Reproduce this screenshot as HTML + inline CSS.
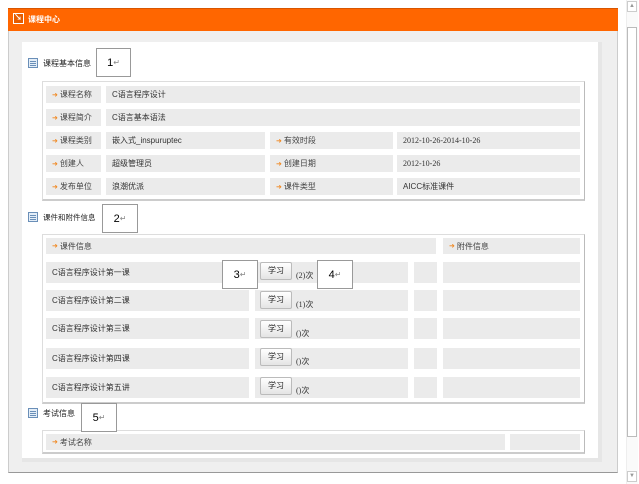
<!DOCTYPE html>
<html><head><meta charset="utf-8"><style>
*{margin:0;padding:0;box-sizing:border-box}
body{width:639px;height:484px;background:#fff;position:relative;overflow:hidden;font-family:"Liberation Sans","Noto Sans CJK SC",sans-serif;font-size:8px;color:#333}
.a{position:absolute}
.c{position:absolute;background:#ebebeb;line-height:normal;padding-left:6px;display:flex;align-items:center;font-size:8px}
.l{color:#444}
.l:before{content:"➜";color:#f08a24;font-size:7px;margin-right:2px}
.box{position:absolute;border:1px solid #999;background:#fff;font-size:11px;display:flex;align-items:center;justify-content:center;color:#000}
.box span{font-size:8px;color:#888}
.ic{position:absolute;width:10px;height:10px;border:1px solid #6a8fb8;background:#e4eef8}
.ic:after{content:"";position:absolute;left:1px;top:2px;width:6px;height:1px;background:#6a8fb8;box-shadow:0 2px 0 #6a8fb8,0 4px 0 #6a8fb8}
.h{position:absolute;font-size:8px;color:#222;line-height:12px}
.tb{position:absolute;border:1px solid #ddd;border-right-color:#bbb;border-bottom:2px solid #ccc;background:#fff}
.btn{position:absolute;width:32px;height:18px;background:linear-gradient(#fff,#e4e4e4);border:1px solid #bbb;border-radius:2px;font-size:8px;text-align:center;line-height:15px;color:#222}
.n{position:absolute;font-size:8px;font-family:"Liberation Serif","Noto Sans CJK SC",serif}
</style></head><body>
<div class="a" style="left:626px;top:0;width:12px;height:484px;background:#fafafa;border-left:1px solid #eee"></div>
<div class="a" style="left:627px;top:1px;width:10px;height:11px;border:1px solid #ccc;background:#fff;font-size:6px;color:#999;text-align:center;line-height:9px">▲</div>
<div class="a" style="left:627px;top:27px;width:10px;height:410px;border:1px solid #bbb;background:#fff"></div>
<div class="a" style="left:627px;top:471px;width:10px;height:11px;border:1px solid #ccc;background:#fff;font-size:6px;color:#999;text-align:center;line-height:9px">▼</div>
<div class="a" style="left:8px;top:8px;width:610px;height:23px;background:#ff6600;border-top:1px solid #d85500"></div>
<div class="a" style="left:13px;top:13px;width:11px;height:11px;background:#e65c00;border:1px solid #fff"></div>
<div class="a" style="left:14px;top:13px;color:#fff;font-size:8px;line-height:10px;font-weight:bold">↘</div>
<div class="a" style="left:28px;top:14px;color:#fff;font-weight:bold;font-size:8px;line-height:11px">课程中心</div>
<div class="a" style="left:8px;top:31px;width:610px;height:442px;background:#efefef;border:1px solid #ccc;border-top:none;border-bottom:1px solid #999"></div>
<div class="a" style="left:22px;top:42px;width:580px;height:420px;background:#fff;border-right:4px solid #e6e6e6;border-bottom:4px solid #e6e6e6"></div>
<div class="ic" style="left:28px;top:58px"></div>
<div class="h" style="left:43px;top:58px">课程基本信息</div>
<div class="tb" style="left:42px;top:81px;width:543px;height:120px"></div>
<div class="c l" style="left:46px;top:86px;width:55px;height:17px">课程名称</div>
<div class="c" style="left:106px;top:86px;width:474px;height:17px">C语言程序设计</div>
<div class="c l" style="left:46px;top:109px;width:55px;height:17px">课程简介</div>
<div class="c" style="left:106px;top:109px;width:474px;height:17px">C语言基本语法</div>
<div class="c l" style="left:46px;top:132px;width:55px;height:17px">课程类别</div>
<div class="c" style="left:106px;top:132px;width:159px;height:17px">嵌入式_inspuruptec</div>
<div class="c l" style="left:270px;top:132px;width:123px;height:17px">有效时段</div>
<div class="c" style="left:397px;top:132px;width:183px;height:17px;font-family:'Liberation Serif',serif">2012-10-26-2014-10-26</div>
<div class="c l" style="left:46px;top:155px;width:55px;height:17px">创建人</div>
<div class="c" style="left:106px;top:155px;width:159px;height:17px">超级管理员</div>
<div class="c l" style="left:270px;top:155px;width:123px;height:17px">创建日期</div>
<div class="c" style="left:397px;top:155px;width:183px;height:17px;font-family:'Liberation Serif',serif">2012-10-26</div>
<div class="c l" style="left:46px;top:178px;width:55px;height:17px">发布单位</div>
<div class="c" style="left:106px;top:178px;width:159px;height:17px">浪潮优派</div>
<div class="c l" style="left:270px;top:178px;width:123px;height:17px">课件类型</div>
<div class="c" style="left:397px;top:178px;width:183px;height:17px">AICC标准课件</div>
<div class="ic" style="left:28px;top:212px"></div>
<div class="h" style="left:43px;top:212px;font-size:7.5px">课件和附件信息</div>
<div class="tb" style="left:42px;top:234px;width:543px;height:170px"></div>
<div class="c l" style="left:46px;top:238px;width:390px;height:16px">课件信息</div>
<div class="c l" style="left:443px;top:238px;width:137px;height:16px">附件信息</div>
<div class="c" style="left:46px;top:262px;width:203px;height:21px">C语言程序设计第一课</div>
<div class="c" style="left:255px;top:262px;width:153px;height:21px"></div>
<div class="c" style="left:414px;top:262px;width:23px;height:21px"></div>
<div class="c" style="left:443px;top:262px;width:137px;height:21px"></div>
<div class="c" style="left:46px;top:290px;width:203px;height:21px">C语言程序设计第二课</div>
<div class="c" style="left:255px;top:290px;width:153px;height:21px"></div>
<div class="c" style="left:414px;top:290px;width:23px;height:21px"></div>
<div class="c" style="left:443px;top:290px;width:137px;height:21px"></div>
<div class="c" style="left:46px;top:318px;width:203px;height:21px">C语言程序设计第三课</div>
<div class="c" style="left:255px;top:318px;width:153px;height:21px"></div>
<div class="c" style="left:414px;top:318px;width:23px;height:21px"></div>
<div class="c" style="left:443px;top:318px;width:137px;height:21px"></div>
<div class="c" style="left:46px;top:348px;width:203px;height:21px">C语言程序设计第四课</div>
<div class="c" style="left:255px;top:348px;width:153px;height:21px"></div>
<div class="c" style="left:414px;top:348px;width:23px;height:21px"></div>
<div class="c" style="left:443px;top:348px;width:137px;height:21px"></div>
<div class="c" style="left:46px;top:377px;width:203px;height:21px">C语言程序设计第五讲</div>
<div class="c" style="left:255px;top:377px;width:153px;height:21px"></div>
<div class="c" style="left:414px;top:377px;width:23px;height:21px"></div>
<div class="c" style="left:443px;top:377px;width:137px;height:21px"></div>
<div class="btn" style="left:260px;top:262px">学习</div><div class="n" style="left:296px;top:270px">(2)次</div>
<div class="btn" style="left:260px;top:291px">学习</div><div class="n" style="left:296px;top:299px">(1)次</div>
<div class="btn" style="left:260px;top:320px">学习</div><div class="n" style="left:296px;top:328px">()次</div>
<div class="btn" style="left:260px;top:348px">学习</div><div class="n" style="left:296px;top:356px">()次</div>
<div class="btn" style="left:260px;top:377px">学习</div><div class="n" style="left:296px;top:385px">()次</div>
<div class="ic" style="left:28px;top:408px"></div>
<div class="h" style="left:43px;top:408px">考试信息</div>
<div class="tb" style="left:42px;top:430px;width:543px;height:24px"></div>
<div class="c l" style="left:46px;top:434px;width:459px;height:16px">考试名称</div>
<div class="c" style="left:510px;top:434px;width:70px;height:16px"></div>
<div class="box" style="left:96px;top:48px;width:35px;height:29px">1<span>↵</span></div>
<div class="box" style="left:102px;top:204px;width:36px;height:29px">2<span>↵</span></div>
<div class="box" style="left:222px;top:260px;width:36px;height:29px">3<span>↵</span></div>
<div class="box" style="left:317px;top:260px;width:36px;height:29px">4<span>↵</span></div>
<div class="box" style="left:81px;top:403px;width:36px;height:29px">5<span>↵</span></div>
</body></html>
